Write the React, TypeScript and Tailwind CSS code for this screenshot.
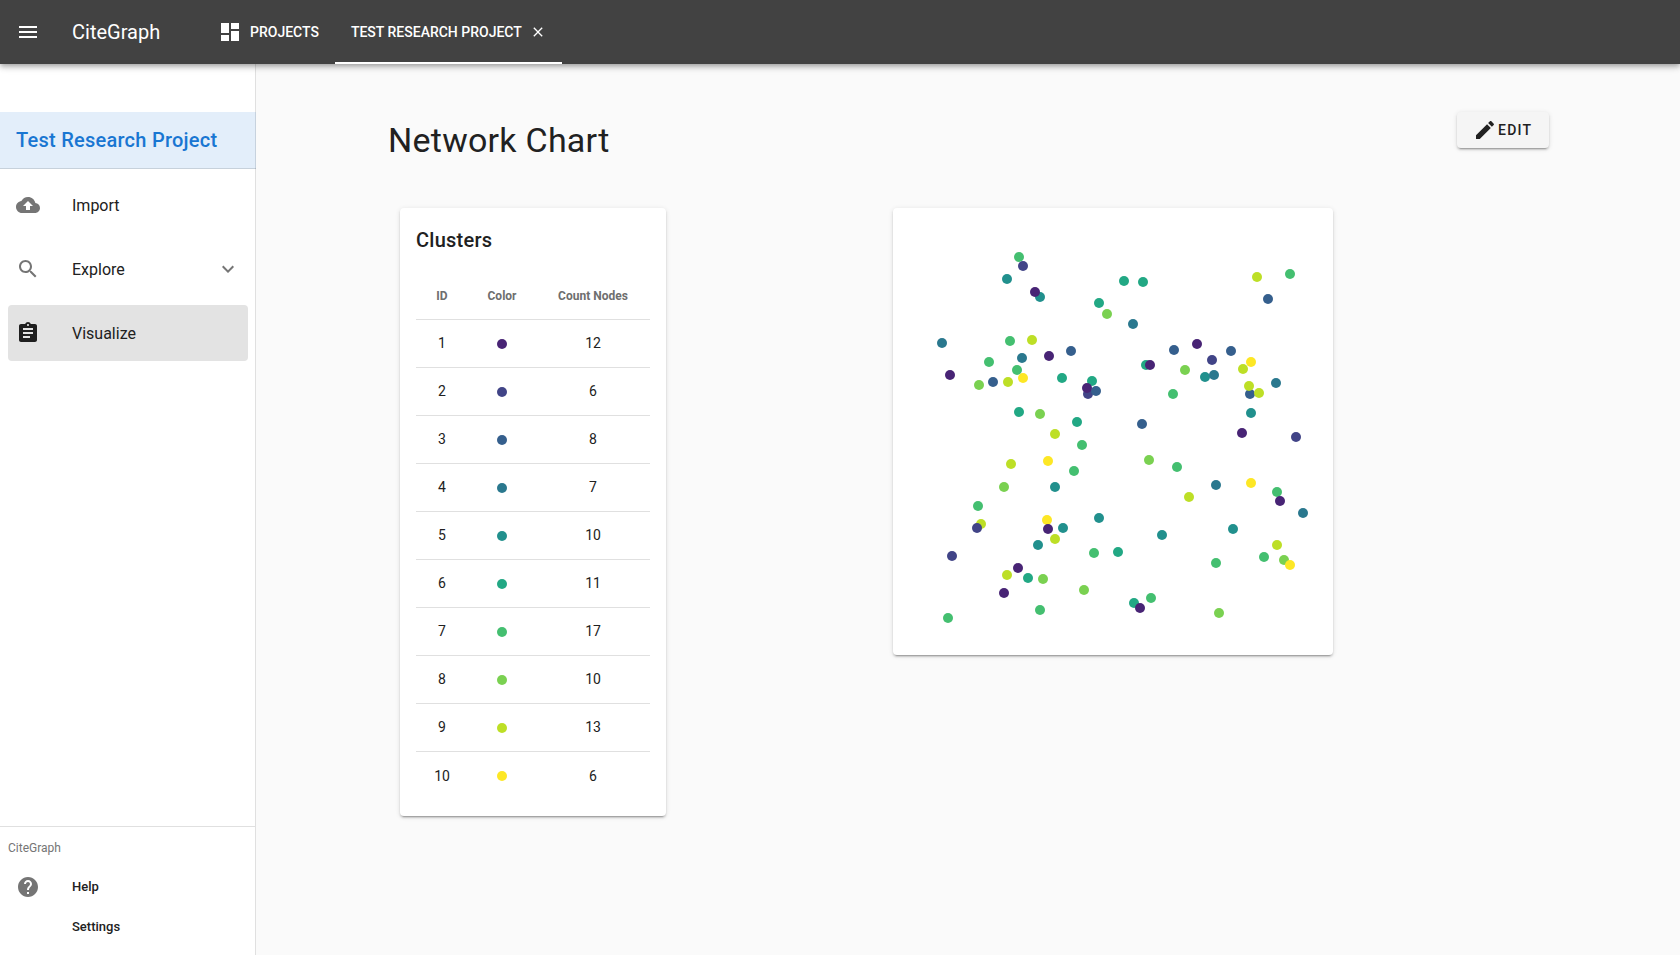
const COLORS = ['#482475', '#414487', '#355f8d', '#2a788e', '#21908d', '#22a884', '#44bf70', '#7ad151', '#bddf26', '#fde725'];
const COUNTS = [12, 6, 8, 7, 10, 11, 17, 10, 13, 6];

// [x, y, cluster]
const NODES: [number, number, number][] = [
  [126, 49, 7], [130, 58, 2], [114, 71, 5], [147, 89, 5], [142, 84, 1], [206, 95, 6], [214, 106, 8], [49, 135, 4],
  [117, 133, 7], [139, 132, 9], [129, 150, 4], [156, 148, 1], [178, 143, 3], [96, 154, 7], [57, 167, 1], [124, 162, 7],
  [86, 177, 8], [100, 174, 3], [115, 174, 9], [130, 170, 10], [169, 170, 6], [199, 173, 6], [195, 186, 2], [203, 183, 3],
  [194, 180, 1], [126, 204, 6], [147, 206, 8], [184, 214, 6], [231, 73, 6], [250, 74, 6], [364, 69, 9], [397, 66, 7],
  [375, 91, 3], [240, 116, 4], [281, 142, 3], [304, 136, 1], [319, 152, 2], [338, 143, 3], [358, 154, 10], [350, 161, 9],
  [253, 157, 6], [257, 157, 1], [292, 162, 8], [312, 169, 5], [321, 167, 4], [357, 186, 3], [356, 178, 9], [366, 185, 9],
  [383, 175, 4], [280, 186, 7], [358, 205, 5], [249, 216, 3], [162, 226, 9], [189, 237, 7], [118, 256, 9], [155, 253, 10],
  [181, 263, 7], [111, 279, 8], [162, 279, 5], [85, 298, 7], [88, 316, 9], [84, 320, 2], [154, 312, 10], [155, 321, 1],
  [170, 320, 5], [206, 310, 5], [162, 331, 9], [145, 337, 5], [59, 348, 2], [201, 345, 7], [125, 360, 1], [114, 367, 9],
  [135, 370, 6], [150, 371, 8], [111, 385, 1], [191, 382, 8], [55, 410, 7], [147, 402, 7], [349, 225, 1], [403, 229, 2],
  [256, 252, 8], [284, 259, 7], [323, 277, 4], [358, 275, 10], [296, 289, 9], [384, 284, 7], [387, 293, 1], [410, 305, 4],
  [340, 321, 5], [269, 327, 5], [225, 344, 6], [384, 337, 9], [371, 349, 7], [323, 355, 7], [391, 352, 8], [397, 357, 10],
  [241, 395, 6], [247, 400, 1], [258, 390, 7], [326, 405, 8],
];

const ICONS = {
  menu: 'M3,6H21V8H3V6M3,11H21V13H3V11M3,16H21V18H3V16Z',
  dashboard: 'M13,3V9H21V3M13,21H21V11H13M3,21H11V15H3M3,13H11V3H3V13Z',
  close: 'M19,6.41L17.59,5L12,10.59L6.41,5L5,6.41L10.59,12L5,17.59L6.41,19L12,13.41L17.59,19L19,17.59L13.41,12L19,6.41Z',
  upload: 'M19.35 10.04C18.67 6.59 15.64 4 12 4 9.11 4 6.6 5.64 5.35 8.04 2.34 8.36 0 10.91 0 14c0 3.31 2.69 6 6 6h13c2.76 0 5-2.24 5-5 0-2.64-2.05-4.78-4.65-4.96zM14 13v4h-4v-4H7l5-5 5 5h-3z',
  search: 'M15.5 14h-.79l-.28-.27C15.41 12.59 16 11.11 16 9.5 16 5.91 13.09 3 9.5 3S3 5.91 3 9.5 5.91 16 9.5 16c1.61 0 3.09-.59 4.23-1.57l.27.28v.79l5 4.99L20.49 19l-4.99-5zm-6 0C7.01 14 5 11.99 5 9.5S7.01 5 9.5 5 14 7.01 14 9.5 11.99 14 9.5 14z',
  chevron: 'M7.41,8.58L12,13.17L16.59,8.58L18,10L12,16L6,10L7.41,8.58Z',
  clipboard: 'M19 3h-4.18C14.4 1.84 13.3 1 12 1c-1.3 0-2.4.84-2.82 2H5c-1.1 0-2 .9-2 2v14c0 1.1.9 2 2 2h14c1.1 0 2-.9 2-2V5c0-1.1-.9-2-2-2zm-7 0c.55 0 1 .45 1 1s-.45 1-1 1-1-.45-1-1 .45-1 1-1zm2 14H7v-2h7v2zm3-4H7v-2h10v2zm0-4H7V7h10v2z',
  help: 'M12 2C6.48 2 2 6.48 2 12s4.48 10 10 10 10-4.48 10-10S17.52 2 12 2zm1 17h-2v-2h2v2zm2.07-7.75l-.9.92C13.45 12.9 13 13.5 13 15h-2v-.5c0-1.1.45-2.1 1.17-2.83l1.24-1.26c.37-.36.59-.86.59-1.41 0-1.1-.9-2-2-2s-2 .9-2 2H8c0-2.21 1.79-4 4-4s4 1.79 4 4c0 .88-.36 1.68-.93 2.25z',
  pencil: 'M20.71,7.04C21.1,6.65 21.1,6 20.71,5.63L18.37,3.29C18,2.9 17.35,2.9 16.96,3.29L15.12,5.12L18.87,8.87M3,17.25V21H6.75L17.81,9.93L14.06,6.18L3,17.25Z',
};

function Icon({ name, className = 'size-6' }: { name: keyof typeof ICONS; className?: string }) {
  return (
    <svg viewBox="0 0 24 24" fill="currentColor" className={`shrink-0 ${className}`}>
      <path d={ICONS[name]} />
    </svg>
  );
}

function Dot({ color }: { color: string }) {
  return (
    <svg viewBox="0 0 10 10" className="mx-auto size-2.5">
      <circle cx="5" cy="5" r="5" fill={color} />
    </svg>
  );
}

const CARD = 'rounded bg-white shadow-[0_3px_1px_-2px_rgba(0,0,0,0.2),0_2px_2px_0_rgba(0,0,0,0.14),0_1px_5px_0_rgba(0,0,0,0.12)]';

function NavItem({ icon, label, active, expandable }: { icon: keyof typeof ICONS; label: string; active?: boolean; expandable?: boolean }) {
  return (
    <a className={`flex h-14 items-center rounded px-2 ${active ? 'bg-[#e3e3e3]' : ''}`}>
      <Icon name={icon} className={`size-6 ${active ? 'text-[#1f1f1f]' : 'text-[#757575]'}`} />
      <span className="ml-8 flex-1 pt-0.5 text-base">{label}</span>
      {expandable && <Icon name="chevron" className="size-6 text-[#757575]" />}
    </a>
  );
}

export default function App() {
  return (
    <div className="flex h-screen flex-col overflow-hidden bg-[#fafafa] font-['Roboto',sans-serif] text-[#212121]">
      <header className="z-10 flex h-16 shrink-0 items-center bg-[#424242] pl-4 text-white shadow-[0_2px_4px_-1px_rgba(0,0,0,0.2),0_4px_5px_0_rgba(0,0,0,0.14),0_1px_10px_0_rgba(0,0,0,0.12)]">
        <Icon name="menu" />
        <h1 className="ml-8 w-[132px] text-xl">CiteGraph</h1>
        <nav className="flex h-full text-sm font-medium">
          <a className="flex items-center px-4">
            <Icon name="dashboard" className="mr-2 -ml-0.5 size-6" />
            PROJECTS
          </a>
          <a className="flex items-center border-b-2 border-white px-4 pt-0.5">
            TEST RESEARCH PROJECT
            <Icon name="close" className="ml-2 size-4" />
          </a>
        </nav>
      </header>

      <div className="flex min-h-0 flex-1">
        <aside className="flex w-64 shrink-0 flex-col border-r border-black/12 bg-white pt-12">
          <h2 className="-mr-px flex h-[57px] shrink-0 items-center border-b border-black/12 bg-[#1976d2]/12 pl-4 text-xl font-medium tracking-[0.0125em] text-[#1976d2]">
            Test Research Project
          </h2>
          <nav className="flex flex-col gap-2 py-2 pr-[7px] pl-2">
            <NavItem icon="upload" label="Import" />
            <NavItem icon="search" label="Explore" expandable />
            <NavItem icon="clipboard" label="Visualize" active />
          </nav>
          <div className="mt-auto h-[129px] border-t border-black/12">
            <p className="flex h-10 items-center pt-0.5 pl-2 text-xs text-[#757575]">CiteGraph</p>
            <a className="flex h-10 items-center pl-4 text-[13px] font-medium">
              <Icon name="help" className="mr-8 size-6 text-[#757575]" />
              Help
            </a>
            <a className="flex h-10 items-center pl-[72px] text-[13px] font-medium">Settings</a>
          </div>
        </aside>

        <main className="flex-1 pt-12 pl-[132px]">
          <div className="flex h-24 w-[1161px] items-start justify-between">
            <h2 className="pt-2 text-[34px] leading-10 tracking-[0.0073em]">Network Chart</h2>
            <button className="flex h-9 w-[92px] items-center gap-px rounded bg-[#f5f5f5] pl-4 text-sm font-medium tracking-[0.0893em] shadow-[0_3px_1px_-2px_rgba(0,0,0,0.2),0_2px_2px_0_rgba(0,0,0,0.14),0_1px_5px_0_rgba(0,0,0,0.12)]">
              <Icon name="pencil" />
              EDIT
            </button>
          </div>
          <div className="flex items-start gap-[227px] pl-3">
            <section className={`h-[608px] w-[266px] px-4 ${CARD}`}>
              <h3 className="flex h-16 items-center text-xl font-medium tracking-[0.0125em]">Clusters</h3>
              <table className="w-full table-fixed border-separate border-spacing-0 text-center text-sm">
                <thead>
                  <tr className="text-xs text-[#6e6e6e]">
                    <th className="h-12 w-[51px] border-b border-black/12 pl-px font-bold">ID</th>
                    <th className="h-12 w-[70px] border-b border-black/12 font-bold">Color</th>
                    <th className="h-12 border-b border-black/12 pr-px font-bold">Count Nodes</th>
                  </tr>
                </thead>
                <tbody className="[&>tr:last-child>td]:border-b-0 [&>tr:last-child>td]:py-0">
                  {COUNTS.map((count, i) => (
                    <tr key={i}>
                      <td className="h-12 border-b border-black/12 pb-px pl-px">{i + 1}</td>
                      <td className="h-12 border-b border-black/12 pt-px"><Dot color={COLORS[i]} /></td>
                      <td className="h-12 border-b border-black/12 pr-px pb-px">{count}</td>
                    </tr>
                  ))}
                </tbody>
              </table>
            </section>
            <section className={`h-[447px] w-[440px] ${CARD}`}>
              <svg viewBox="0 0 440 447" className="h-full w-full">
                {NODES.map(([x, y, c], i) => (
                  <circle key={i} cx={x} cy={y} r="5" fill={COLORS[c - 1]} />
                ))}
              </svg>
            </section>
          </div>
        </main>
      </div>
    </div>
  );
}
